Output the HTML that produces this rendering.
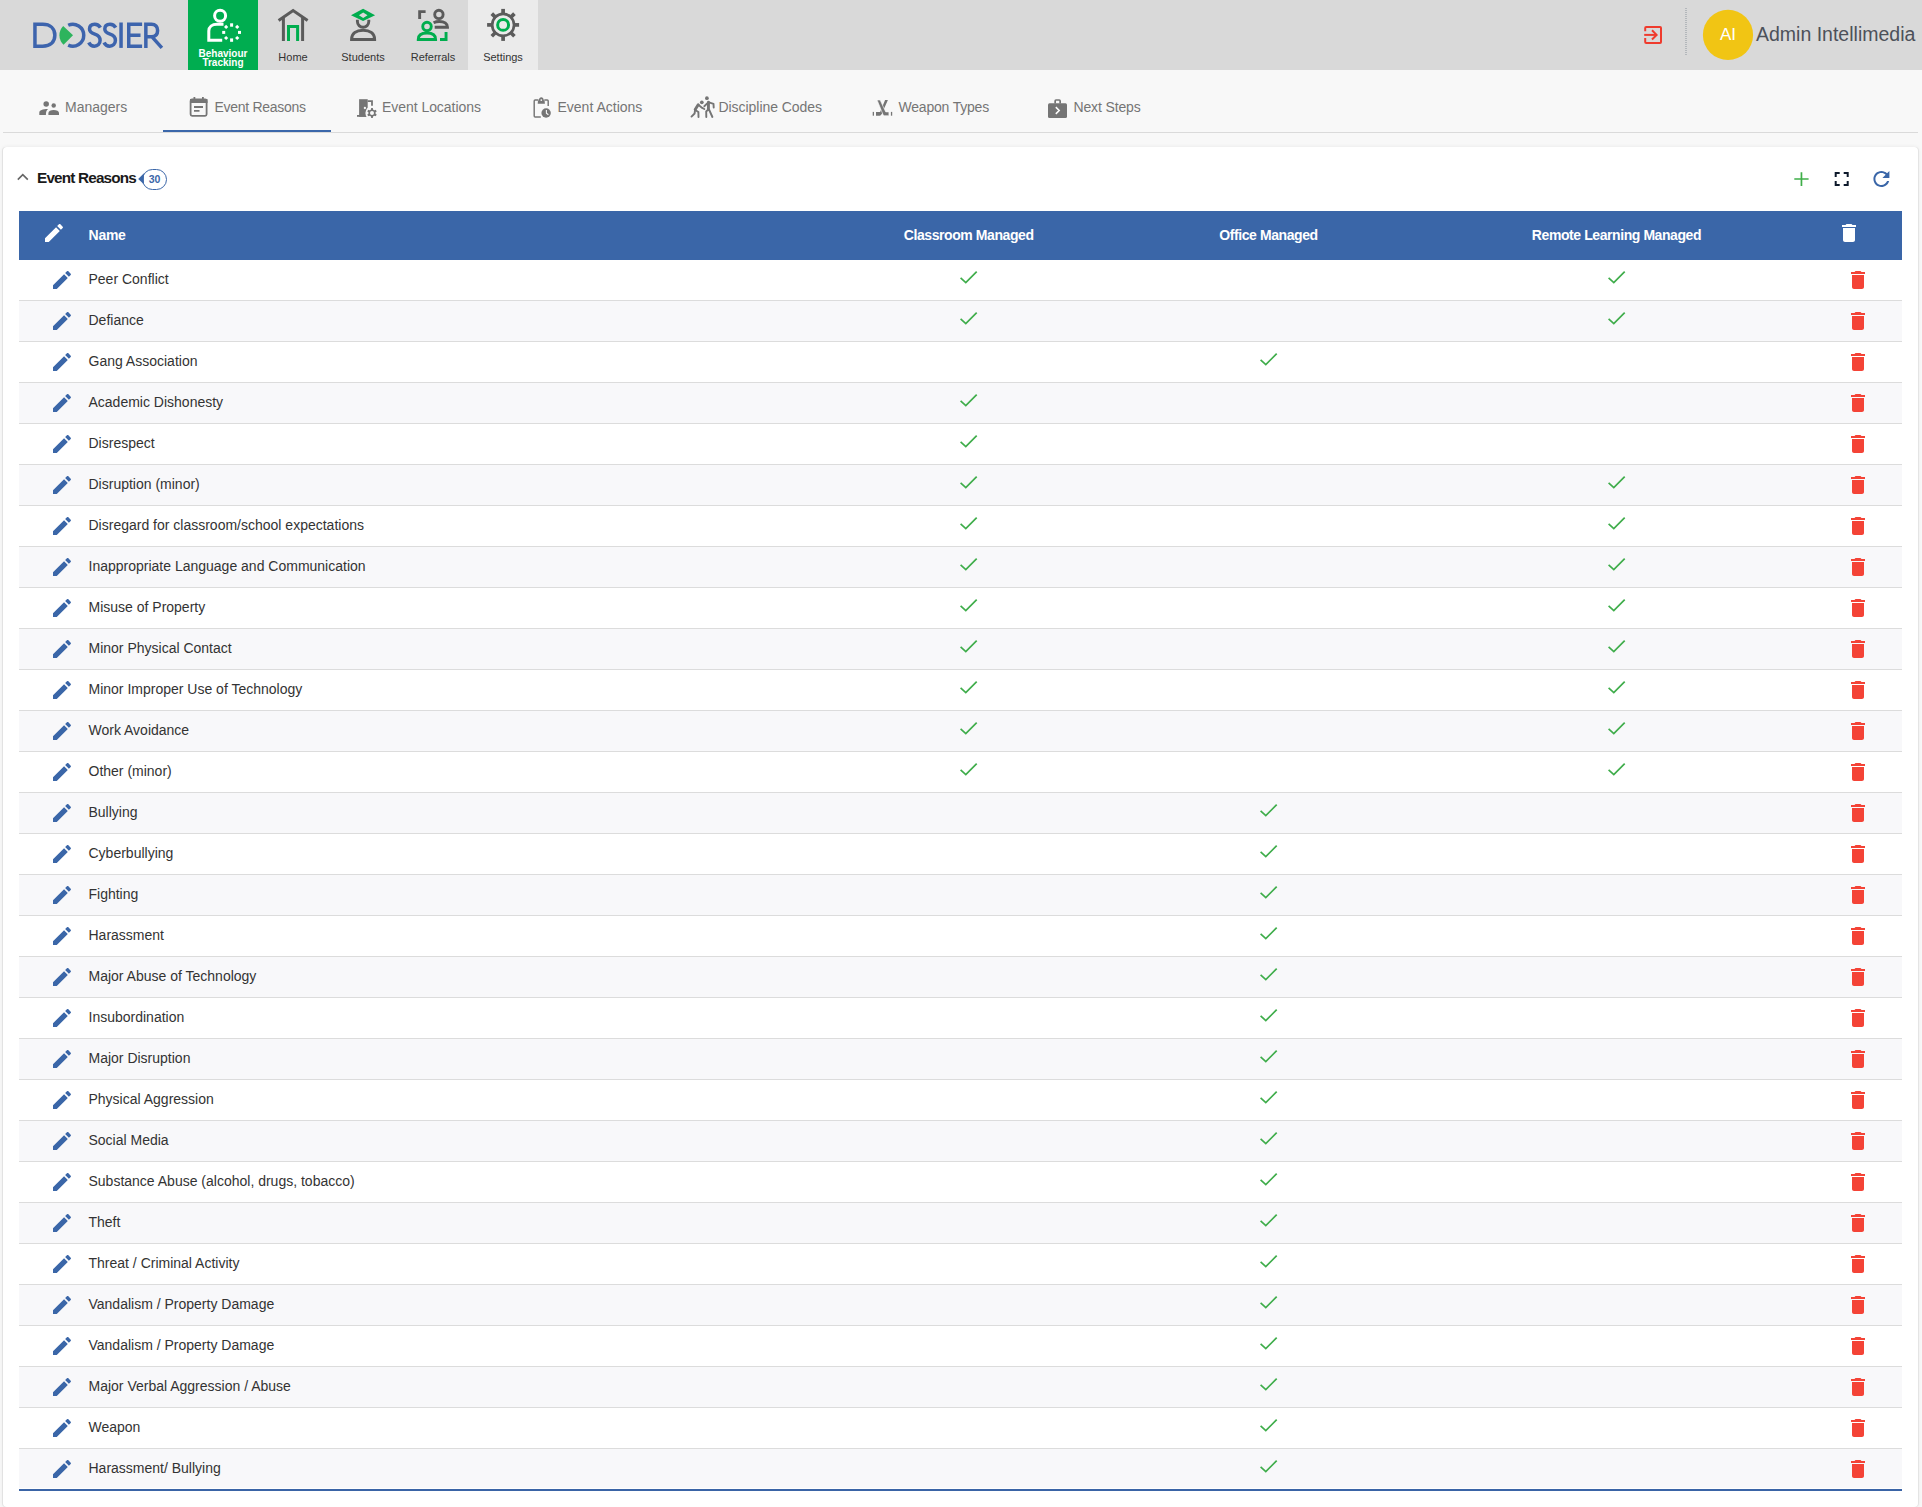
<!DOCTYPE html>
<html><head><meta charset="utf-8"><title>Event Reasons</title>
<style>
html,body{margin:0;padding:0}
body{width:1922px;height:1507px;position:relative;overflow:hidden;background:#f8f8f8;font-family:"Liberation Sans",sans-serif;color:#333}
.abs{position:absolute}
#nav{position:absolute;left:0;top:0;width:1922px;height:70px;background:#d9d9d9}
.nb{position:absolute;top:0;width:70px;height:70px}
.nl{position:absolute;left:0;width:70px;top:51px;text-align:center;font-size:11px;line-height:13px;color:#333}
.tab{position:absolute;top:0;height:62px;color:#757575;font-size:14px}
.tab svg{position:absolute}
.tab span{position:absolute;top:25px;line-height:16px;white-space:nowrap}
#card{position:absolute;left:3px;top:147px;width:1915px;height:1360px;background:#fff;border-radius:4px;box-shadow:1px 0 0 #e4e4e4,-1px 0 0 #e2e2e2,0 0 4px rgba(0,0,0,0.07)}
#thead{position:absolute;left:19px;top:211px;width:1883px;height:49px;background:#3a66a8;color:#fff;font-weight:bold;font-size:14px}
#thead span{position:absolute;top:16px;line-height:16px;white-space:nowrap;letter-spacing:-0.42px}
.row{position:absolute;left:19px;width:1883px;height:40px;border-bottom:1px solid #dcdcdc;background:#fff}
.row.alt{background:#f8f8fa}
.row.last{height:39px;border-bottom:none}
.row.last:after{content:"";position:absolute;left:0;top:40px;width:1883px;height:2px;background:#3a64a6}
.pen{position:absolute;left:31.4px;top:8px;fill:#3a66a8}
.nm{position:absolute;left:69.5px;top:11px;font-size:14px;line-height:16px;color:#333;white-space:nowrap}
.chk{position:absolute;top:10px}
.c1{left:940px}.c2{left:1240px}.c3{left:1588px}
.del{position:absolute;left:1826.5px;top:8px;fill:#f44336}
</style></head><body>
<div id="nav">
<svg class="abs" style="left:0;top:0" width="1922" height="70" viewBox="0 0 1922 70">
 <!-- logo -->
 <g transform="translate(33.2,22.5)" fill="none" stroke="#3d64ad" stroke-width="3.5">
  <path d="M1.75,1.75 H9.5 C17,1.75 21.65,6 21.65,12.7 C21.65,19.4 17,23.65 9.5,23.65 H1.75 Z"/>
  <path d="M35,2.76 A10.95,10.95 0 1 1 35,22.64"/>
  <path d="M67.2,5.2 C66,3 64,1.75 61.5,1.75 C58.2,1.75 56.3,3.7 56.3,6.5 C56.3,9.4 58.6,10.6 61.6,11.6 C64.9,12.7 66.9,14.2 66.9,17.8 C66.9,21.5 64.4,23.65 61.2,23.65 C58.6,23.65 56.6,22.3 55.6,20"/>
  <path d="M82.5,5.2 C81.3,3 79.3,1.75 76.8,1.75 C73.5,1.75 71.6,3.7 71.6,6.5 C71.6,9.4 73.9,10.6 76.9,11.6 C80.2,12.7 82.2,14.2 82.2,17.8 C82.2,21.5 79.7,23.65 76.5,23.65 C73.9,23.65 71.9,22.3 70.9,20"/>
  <path d="M87.85,0 V25.4"/>
  <path d="M108.9,1.75 H95.55 V23.65 H108.9 M95.55,12.7 H107.3"/>
  <path d="M112.65,25.4 V1.75 H118.3 C122.3,1.75 124.4,4.3 124.4,8 C124.4,11.8 122.3,14.2 118.3,14.2 H112.65 M118.6,14.2 L128.7,25.4"/>
 </g>
 <path transform="translate(33.2,22.5)" d="M30,3.5 L39.8,12.8 L30.4,22.2 A13,13 0 0 1 30,3.5 Z" fill="#2db45d"/>
 <!-- behaviour tracking box -->
 <rect x="188" y="0" width="70" height="70" fill="#00ad50"/>
 <rect x="468" y="0" width="70" height="70" fill="#ebebeb"/>
 <g fill="none" stroke="#fff" stroke-width="3">
  <circle cx="220.1" cy="15.8" r="5.5"/>
  <path d="M222.2,40.3 H208.8 V31 C208.8,27 212,24.3 217,24.3 H223.5"/>
 </g>
 <g fill="#fff">
  <rect x="230.1" y="23.3" width="3" height="3.4"/>
  <rect x="230.1" y="38.4" width="3" height="3.4"/>
  <rect x="222.2" y="30.9" width="3" height="3"/>
  <rect x="238" y="30.9" width="3" height="3"/>
  <rect x="224.6" y="25.4" width="3" height="3" transform="rotate(45 226.1 26.9)"/>
  <rect x="235.7" y="25.4" width="3" height="3" transform="rotate(45 237.2 26.9)"/>
  <rect x="224.6" y="36.5" width="3" height="3" transform="rotate(45 226.1 38)"/>
  <rect x="235.7" y="36.5" width="3" height="3" transform="rotate(45 237.2 38)"/>
 </g>
 <!-- home -->
 <g fill="none" stroke-width="3">
  <polyline points="278.6,20.6 293.1,10.6 307.6,20.6" stroke="#5b5b5b"/>
  <path d="M283.4,17.5 V40.9 M302.6,17.5 V40.9" stroke="#5b5b5b"/>
  <path d="M288.5,40.9 V26.6 H297.6 V40.9" stroke="#00ad4e"/>
 </g>
 <!-- students -->
 <path d="M351,15.3 L363.1,8.8 L375.1,15.3 L363.1,20.9 Z M358.9,15.2 L363.2,17.9 L367.5,15.2 L363.2,12.5 Z" fill="#00ad4e" fill-rule="evenodd"/>
 <g fill="none" stroke="#5b5b5b" stroke-width="2.9">
  <path d="M357.4,19.8 V21.6 A5.7,5.7 0 0 0 368.8,21.6 V19.8"/>
  <path d="M351.55,39.45 C351.55,33.2 356.5,30.25 363.1,30.25 C369.7,30.25 374.65,33.2 374.65,39.45 Z"/>
 </g>
 <!-- referrals -->
 <g fill="none" stroke-width="2.9">
  <path d="M419.65,19 V11.65 H425.6" stroke="#5b5b5b"/>
  <circle cx="438.9" cy="14.4" r="4.2" stroke="#5b5b5b"/>
  <path d="M434.7,27.2 H447.5 C447.5,23.6 444.3,21.45 439.3,21.45 C437.1,21.45 435.2,21.9 433.6,22.7" stroke="#5b5b5b"/>
  <circle cx="427" cy="26.5" r="4.25" stroke="#00ad4e"/>
  <path d="M418.25,39.45 C418.25,35.2 421.6,33.05 427,33.05 C432.4,33.05 435.6,35.2 435.6,39.45 Z" stroke="#00ad4e"/>
  <path d="M440,39.45 H446.05 V32" stroke="#00ad4e"/>
 </g>
 <!-- settings -->
 <g transform="translate(503.1,24.9)">
  <circle r="10.95" fill="none" stroke="#5b5b5b" stroke-width="2.7"/>
  <g fill="#5b5b5b">
   <rect x="-1.85" y="-16" width="3.7" height="6"/>
   <rect x="-1.85" y="-16" width="3.7" height="6" transform="rotate(45)"/>
   <rect x="-1.85" y="-16" width="3.7" height="6" transform="rotate(90)"/>
   <rect x="-1.85" y="-16" width="3.7" height="6" transform="rotate(135)"/>
   <rect x="-1.85" y="-16" width="3.7" height="6" transform="rotate(180)"/>
   <rect x="-1.85" y="-16" width="3.7" height="6" transform="rotate(225)"/>
   <rect x="-1.85" y="-16" width="3.7" height="6" transform="rotate(270)"/>
   <rect x="-1.85" y="-16" width="3.7" height="6" transform="rotate(315)"/>
  </g>
  <circle r="5.45" fill="none" stroke="#00ad4e" stroke-width="3"/>
 </g>
 <!-- logout -->
 <g fill="none" stroke="#ef3b2d" stroke-width="2">
  <path d="M1645.2,31.2 V28 Q1645.2,27 1646.2,27 H1660 Q1661,27 1661,28 V42 Q1661,43 1660,43 H1646.2 Q1645.2,43 1645.2,42 V38.1"/>
  <path d="M1644.2,34.9 H1656.5"/>
  <path d="M1652,30.3 L1656.6,34.9 L1652,39.5"/>
 </g>
 <circle cx="1728" cy="34.9" r="25.1" fill="#f1c514"/>
</svg>
<div class="nl" style="left:188px;top:49px;color:#fff;font-weight:bold;font-size:10px;line-height:9.2px">Behaviour<br>Tracking</div>
<div class="nl" style="left:258px">Home</div>
<div class="nl" style="left:328px">Students</div>
<div class="nl" style="left:398px">Referrals</div>
<div class="nl" style="left:468px">Settings</div>
<div class="abs" style="left:1685px;top:8px;width:2px;height:47px;background:repeating-linear-gradient(to bottom,#b3b7bb 0,#b3b7bb 1px,transparent 1px,transparent 2px)"></div>
<div class="abs" style="left:1703px;top:26px;width:50px;text-align:center;color:#fff;font-size:17px;line-height:18px">AI</div>
<div class="abs" style="left:1756px;top:23px;font-size:19.5px;line-height:22px;color:#4d515a;white-space:nowrap">Admin Intellimedia</div>
</div>
<!-- tabs -->
<svg class="abs" style="left:0;top:70px" width="1922" height="70" viewBox="0 70 1922 70">
 <g fill="#757575">
  <!-- managers (people) -->
  <circle cx="46.2" cy="104" r="2.75"/><circle cx="53.7" cy="105.5" r="2.2"/>
  <path d="M39.3,114.9 V112.6 C39.3,110.3 42.6,109 48.1,109 C46.5,110.3 45.9,112 45.9,114.9 Z"/>
  <path d="M48.4,114.9 V113.1 C48.4,111.1 50.8,110 53.7,110 C56.6,110 59,111.1 59,113.1 V114.9 Z"/>
 </g>
 <!-- event reasons (calendar note) -->
 <g fill="none" stroke="#757575" stroke-width="1.8">
  <rect x="190.6" y="99.5" width="16" height="16.3" rx="1.5"/>
  <path d="M194,107 H203 M194,110.8 H199.5" />
 </g>
 <rect x="190" y="99" width="17.5" height="4" fill="#757575"/>
 <rect x="193.5" y="97" width="1.8" height="3" fill="#757575"/>
 <rect x="202" y="97" width="1.8" height="3" fill="#757575"/>
 <!-- event locations -->
 <defs><mask id="doorm"><rect x="340" y="90" width="60" height="40" fill="#fff"/><circle cx="372" cy="113" r="6.6" fill="#000"/></mask></defs>
 <g fill="#757575" mask="url(#doorm)">
  <rect x="359.1" y="99.2" width="8.6" height="17.6"/>
  <rect x="357" y="115" width="9" height="1.8"/>
 </g>
 <path d="M367.7,100.2 H372.9 V105.7 H371.1 V101.9 H367.7 Z" fill="#757575"/>
 <circle cx="364.9" cy="108" r="1.15" fill="#f8f8f8"/>
 <g transform="translate(372,113)" fill="#757575">
  <circle r="3.6"/>
  <rect x="-1" y="-4.9" width="2" height="9.8"/>
  <rect x="-1" y="-4.9" width="2" height="9.8" transform="rotate(60)"/>
  <rect x="-1" y="-4.9" width="2" height="9.8" transform="rotate(120)"/>
 </g>
 <circle cx="372" cy="113" r="2" fill="#f8f8f8"/>
 <!-- event actions (clipboard clock) -->
 <path d="M540.8,117.05 H535.2 Q534.2,117.05 534.2,116.05 V101.1 Q534.2,100.05 535.2,100.05 H538.5 M544.3,100.05 H547.2 Q548.2,100.05 548.2,101.1 V105.9" fill="none" stroke="#757575" stroke-width="1.45"/>
 <path d="M537.7,103.8 H544.9 L544.6,100.6 H543.9 Q543.3,97.3 541.3,97.3 Q539.3,97.3 538.7,100.6 H538 Z" fill="#757575"/>
 <circle cx="541.3" cy="100.1" r="0.9" fill="#f8f8f8"/>
 <circle cx="546.1" cy="113" r="4.7" fill="#757575"/>
 <path d="M546.4,110.1 V113.2 L548.4,114.8" fill="none" stroke="#f8f8f8" stroke-width="1.1"/>
 <!-- discipline codes (two figures) -->
 <g fill="#757575">
  <circle cx="701.8" cy="102.3" r="1.85"/>
  <circle cx="706.9" cy="98.2" r="1.85"/>
 </g>
 <g fill="none" stroke="#757575" stroke-linecap="round" stroke-linejoin="round">
  <path d="M698.2,104.8 L695.2,109.6" stroke-width="2.9"/>
  <path d="M698.6,105 L702.2,107.9 L704.3,109" stroke-width="1.9"/>
  <path d="M695.2,110 L698.4,112 L698.5,117" stroke-width="1.9"/>
  <path d="M695,110.5 L694.6,113.5 L691.5,116.6" stroke-width="1.9"/>
  <path d="M708.5,102.2 L708.4,109.6" stroke-width="2.9"/>
  <path d="M708,102.6 L704.3,106.2" stroke-width="1.9"/>
  <path d="M709,102.3 L713.5,103.8 L713.7,107.5" stroke-width="1.9"/>
  <path d="M707.8,109.8 L706.2,111.5 L706.3,117" stroke-width="1.9"/>
  <path d="M709,109.5 L712.4,117" stroke-width="1.9"/>
 </g>
 <!-- weapon types (hockey sticks) -->
 <g fill="#757575">
  <path d="M885.1,100 H887.9 L882.9,111.3 Q881.6,115.7 879.4,115.7 H876 V111.9 H880.1 Z"/>
  <path d="M877.1,100 H880.1 L885.7,111.9 H888.9 V115.7 H884.4 Q883.5,115.7 883,114.6 Z" stroke="#f8f8f8" stroke-width="0.6"/>
  <rect x="872.7" y="111.9" width="1.3" height="3.8"/>
  <rect x="890.9" y="111.9" width="1.3" height="3.8"/>
 </g>
 <!-- next steps (briefcase) -->
 <g fill="#757575">
  <rect x="1048" y="103.3" width="19" height="14.6" rx="1.5"/>
  <path d="M1054.3,103.5 V101 Q1054.3,99.2 1056,99.2 H1059.2 Q1061,99.2 1061,101 V103.5 H1059.3 V100.8 H1056 V103.5 Z"/>
 </g>
 <path d="M1055.8,107.1 L1059.2,110.5 L1055.8,113.9" fill="none" stroke="#fff" stroke-width="1.5"/>
</svg>
<div class="abs" style="left:65px;top:99px;font-size:14px;line-height:16px;color:#757575;white-space:nowrap">Managers</div>
<div class="abs" style="left:214.5px;top:99px;font-size:14px;line-height:16px;color:#757575;white-space:nowrap;letter-spacing:-0.29px">Event Reasons</div>
<div class="abs" style="left:382px;top:99px;font-size:14px;line-height:16px;color:#757575;white-space:nowrap;letter-spacing:-0.05px">Event Locations</div>
<div class="abs" style="left:557.5px;top:99px;font-size:14px;line-height:16px;color:#757575;white-space:nowrap">Event Actions</div>
<div class="abs" style="left:718.5px;top:99px;font-size:14px;line-height:16px;color:#757575;white-space:nowrap;letter-spacing:-0.05px">Discipline Codes</div>
<div class="abs" style="left:898.5px;top:99px;font-size:14px;line-height:16px;color:#757575;white-space:nowrap;letter-spacing:-0.2px">Weapon Types</div>
<div class="abs" style="left:1073.5px;top:99px;font-size:14px;line-height:16px;color:#757575;white-space:nowrap;letter-spacing:-0.14px">Next Steps</div>
<div class="abs" style="left:163px;top:130px;width:168px;height:2px;background:#3b67aa"></div>
<div class="abs" style="left:3px;top:132px;width:1915px;height:1px;background:#dadada"></div>
<!-- card -->
<div id="card"></div>
<svg class="abs" style="left:0;top:147px" width="1922" height="60" viewBox="0 147 1922 60">
 <path d="M17.8,179.6 L22.8,174.6 L27.8,179.6" fill="none" stroke="#666" stroke-width="1.6"/>
 <rect x="142.5" y="169.5" width="24" height="20" rx="10" fill="#fff" stroke="#3a66a8" stroke-width="1"/>
 <path d="M138.2,178.9 L143.9,173.2 V184.2 Z" fill="#3a66a8"/>
 <g stroke="#3fae49" stroke-width="1.7"><path d="M1794.3,179 H1808.6 M1801.45,172.2 V185.9"/></g>
 <g transform="translate(1829.7,167)" fill="#0e1a2b"><path d="M7 14H5v5h5v-2H7v-3zm-2-4h2V7h3V5H5v5zm12 7h-3v2h5v-5h-2v3zM14 5v2h3v3h2V5h-5z"/></g>
 <g transform="translate(1869.4,167)" fill="#3a66a8"><path d="M17.65 6.35C16.2 4.9 14.21 4 12 4c-4.42 0-7.99 3.58-7.99 8s3.57 8 7.99 8c3.73 0 6.84-2.55 7.73-6h-2.08c-.82 2.33-3.04 4-5.65 4-3.31 0-6-2.69-6-6s2.69-6 6-6c1.66 0 3.14.69 4.22 1.78L13 11h7V4l-2.35 2.35z"/></g>
</svg>
<div class="abs" style="left:37px;top:169px;font-size:15.3px;letter-spacing:-0.82px;line-height:17px;font-weight:bold;color:#1a1a1a;white-space:nowrap">Event Reasons</div>
<div class="abs" style="left:142px;top:172.5px;width:25px;text-align:center;font-size:10.5px;line-height:13px;font-weight:bold;color:#3a66a8">30</div>
<div id="thead">
 <svg class="abs" style="left:23px;top:10px" width="24" height="24" viewBox="0 0 24 24" fill="#fff"><path d="M3 17.25V21h3.75L17.81 9.94l-3.75-3.75L3 17.25zM20.71 7.04c.39-.39.39-1.02 0-1.41l-2.34-2.34c-.39-.39-1.02-.39-1.41 0l-1.83 1.83 3.75 3.75 1.83-1.83z"/></svg>
 <span style="left:69.6px;letter-spacing:-0.3px">Name</span>
 <span style="left:849.7px;width:200px;text-align:center">Classroom Managed</span>
 <span style="left:1149.5px;width:200px;text-align:center">Office Managed</span>
 <span style="left:1497.5px;width:200px;text-align:center">Remote Learning Managed</span>
 <svg class="abs" style="left:1818.3px;top:10px" width="24" height="24" viewBox="0 0 24 24" fill="#fff"><path d="M6 19c0 1.1.9 2 2 2h8c1.1 0 2-.9 2-2V7H6v12zM19 4h-3.5l-1-1h-5l-1 1H5v2h14V4z"/></svg>
</div>
<div id="tbl">
<div class="row" style="top:260px"><svg class="pen" width="24" height="24" viewBox="0 0 24 24"><path d="M3 17.25V21h3.75L17.81 9.94l-3.75-3.75L3 17.25zM20.71 7.04c.39-.39.39-1.02 0-1.41l-2.34-2.34c-.39-.39-1.02-.39-1.41 0l-1.83 1.83 3.75 3.75 1.83-1.83z"/></svg><span class="nm">Peer Conflict</span><svg class="chk c1" width="20" height="14" viewBox="0 0 20 14"><polyline points="1.6,7.8 6.8,12.6 17.7,1.6" fill="none" stroke="#3fad4b" stroke-width="1.7"/></svg><svg class="chk c3" width="20" height="14" viewBox="0 0 20 14"><polyline points="1.6,7.8 6.8,12.6 17.7,1.6" fill="none" stroke="#3fad4b" stroke-width="1.7"/></svg><svg class="del" width="24" height="24" viewBox="0 0 24 24"><path d="M6 19c0 1.1.9 2 2 2h8c1.1 0 2-.9 2-2V7H6v12zM19 4h-3.5l-1-1h-5l-1 1H5v2h14V4z"/></svg></div>
<div class="row alt" style="top:301px"><svg class="pen" width="24" height="24" viewBox="0 0 24 24"><path d="M3 17.25V21h3.75L17.81 9.94l-3.75-3.75L3 17.25zM20.71 7.04c.39-.39.39-1.02 0-1.41l-2.34-2.34c-.39-.39-1.02-.39-1.41 0l-1.83 1.83 3.75 3.75 1.83-1.83z"/></svg><span class="nm">Defiance</span><svg class="chk c1" width="20" height="14" viewBox="0 0 20 14"><polyline points="1.6,7.8 6.8,12.6 17.7,1.6" fill="none" stroke="#3fad4b" stroke-width="1.7"/></svg><svg class="chk c3" width="20" height="14" viewBox="0 0 20 14"><polyline points="1.6,7.8 6.8,12.6 17.7,1.6" fill="none" stroke="#3fad4b" stroke-width="1.7"/></svg><svg class="del" width="24" height="24" viewBox="0 0 24 24"><path d="M6 19c0 1.1.9 2 2 2h8c1.1 0 2-.9 2-2V7H6v12zM19 4h-3.5l-1-1h-5l-1 1H5v2h14V4z"/></svg></div>
<div class="row" style="top:342px"><svg class="pen" width="24" height="24" viewBox="0 0 24 24"><path d="M3 17.25V21h3.75L17.81 9.94l-3.75-3.75L3 17.25zM20.71 7.04c.39-.39.39-1.02 0-1.41l-2.34-2.34c-.39-.39-1.02-.39-1.41 0l-1.83 1.83 3.75 3.75 1.83-1.83z"/></svg><span class="nm">Gang Association</span><svg class="chk c2" width="20" height="14" viewBox="0 0 20 14"><polyline points="1.6,7.8 6.8,12.6 17.7,1.6" fill="none" stroke="#3fad4b" stroke-width="1.7"/></svg><svg class="del" width="24" height="24" viewBox="0 0 24 24"><path d="M6 19c0 1.1.9 2 2 2h8c1.1 0 2-.9 2-2V7H6v12zM19 4h-3.5l-1-1h-5l-1 1H5v2h14V4z"/></svg></div>
<div class="row alt" style="top:383px"><svg class="pen" width="24" height="24" viewBox="0 0 24 24"><path d="M3 17.25V21h3.75L17.81 9.94l-3.75-3.75L3 17.25zM20.71 7.04c.39-.39.39-1.02 0-1.41l-2.34-2.34c-.39-.39-1.02-.39-1.41 0l-1.83 1.83 3.75 3.75 1.83-1.83z"/></svg><span class="nm">Academic Dishonesty</span><svg class="chk c1" width="20" height="14" viewBox="0 0 20 14"><polyline points="1.6,7.8 6.8,12.6 17.7,1.6" fill="none" stroke="#3fad4b" stroke-width="1.7"/></svg><svg class="del" width="24" height="24" viewBox="0 0 24 24"><path d="M6 19c0 1.1.9 2 2 2h8c1.1 0 2-.9 2-2V7H6v12zM19 4h-3.5l-1-1h-5l-1 1H5v2h14V4z"/></svg></div>
<div class="row" style="top:424px"><svg class="pen" width="24" height="24" viewBox="0 0 24 24"><path d="M3 17.25V21h3.75L17.81 9.94l-3.75-3.75L3 17.25zM20.71 7.04c.39-.39.39-1.02 0-1.41l-2.34-2.34c-.39-.39-1.02-.39-1.41 0l-1.83 1.83 3.75 3.75 1.83-1.83z"/></svg><span class="nm">Disrespect</span><svg class="chk c1" width="20" height="14" viewBox="0 0 20 14"><polyline points="1.6,7.8 6.8,12.6 17.7,1.6" fill="none" stroke="#3fad4b" stroke-width="1.7"/></svg><svg class="del" width="24" height="24" viewBox="0 0 24 24"><path d="M6 19c0 1.1.9 2 2 2h8c1.1 0 2-.9 2-2V7H6v12zM19 4h-3.5l-1-1h-5l-1 1H5v2h14V4z"/></svg></div>
<div class="row alt" style="top:465px"><svg class="pen" width="24" height="24" viewBox="0 0 24 24"><path d="M3 17.25V21h3.75L17.81 9.94l-3.75-3.75L3 17.25zM20.71 7.04c.39-.39.39-1.02 0-1.41l-2.34-2.34c-.39-.39-1.02-.39-1.41 0l-1.83 1.83 3.75 3.75 1.83-1.83z"/></svg><span class="nm">Disruption (minor)</span><svg class="chk c1" width="20" height="14" viewBox="0 0 20 14"><polyline points="1.6,7.8 6.8,12.6 17.7,1.6" fill="none" stroke="#3fad4b" stroke-width="1.7"/></svg><svg class="chk c3" width="20" height="14" viewBox="0 0 20 14"><polyline points="1.6,7.8 6.8,12.6 17.7,1.6" fill="none" stroke="#3fad4b" stroke-width="1.7"/></svg><svg class="del" width="24" height="24" viewBox="0 0 24 24"><path d="M6 19c0 1.1.9 2 2 2h8c1.1 0 2-.9 2-2V7H6v12zM19 4h-3.5l-1-1h-5l-1 1H5v2h14V4z"/></svg></div>
<div class="row" style="top:506px"><svg class="pen" width="24" height="24" viewBox="0 0 24 24"><path d="M3 17.25V21h3.75L17.81 9.94l-3.75-3.75L3 17.25zM20.71 7.04c.39-.39.39-1.02 0-1.41l-2.34-2.34c-.39-.39-1.02-.39-1.41 0l-1.83 1.83 3.75 3.75 1.83-1.83z"/></svg><span class="nm">Disregard for classroom/school expectations</span><svg class="chk c1" width="20" height="14" viewBox="0 0 20 14"><polyline points="1.6,7.8 6.8,12.6 17.7,1.6" fill="none" stroke="#3fad4b" stroke-width="1.7"/></svg><svg class="chk c3" width="20" height="14" viewBox="0 0 20 14"><polyline points="1.6,7.8 6.8,12.6 17.7,1.6" fill="none" stroke="#3fad4b" stroke-width="1.7"/></svg><svg class="del" width="24" height="24" viewBox="0 0 24 24"><path d="M6 19c0 1.1.9 2 2 2h8c1.1 0 2-.9 2-2V7H6v12zM19 4h-3.5l-1-1h-5l-1 1H5v2h14V4z"/></svg></div>
<div class="row alt" style="top:547px"><svg class="pen" width="24" height="24" viewBox="0 0 24 24"><path d="M3 17.25V21h3.75L17.81 9.94l-3.75-3.75L3 17.25zM20.71 7.04c.39-.39.39-1.02 0-1.41l-2.34-2.34c-.39-.39-1.02-.39-1.41 0l-1.83 1.83 3.75 3.75 1.83-1.83z"/></svg><span class="nm">Inappropriate Language and Communication</span><svg class="chk c1" width="20" height="14" viewBox="0 0 20 14"><polyline points="1.6,7.8 6.8,12.6 17.7,1.6" fill="none" stroke="#3fad4b" stroke-width="1.7"/></svg><svg class="chk c3" width="20" height="14" viewBox="0 0 20 14"><polyline points="1.6,7.8 6.8,12.6 17.7,1.6" fill="none" stroke="#3fad4b" stroke-width="1.7"/></svg><svg class="del" width="24" height="24" viewBox="0 0 24 24"><path d="M6 19c0 1.1.9 2 2 2h8c1.1 0 2-.9 2-2V7H6v12zM19 4h-3.5l-1-1h-5l-1 1H5v2h14V4z"/></svg></div>
<div class="row" style="top:588px"><svg class="pen" width="24" height="24" viewBox="0 0 24 24"><path d="M3 17.25V21h3.75L17.81 9.94l-3.75-3.75L3 17.25zM20.71 7.04c.39-.39.39-1.02 0-1.41l-2.34-2.34c-.39-.39-1.02-.39-1.41 0l-1.83 1.83 3.75 3.75 1.83-1.83z"/></svg><span class="nm">Misuse of Property</span><svg class="chk c1" width="20" height="14" viewBox="0 0 20 14"><polyline points="1.6,7.8 6.8,12.6 17.7,1.6" fill="none" stroke="#3fad4b" stroke-width="1.7"/></svg><svg class="chk c3" width="20" height="14" viewBox="0 0 20 14"><polyline points="1.6,7.8 6.8,12.6 17.7,1.6" fill="none" stroke="#3fad4b" stroke-width="1.7"/></svg><svg class="del" width="24" height="24" viewBox="0 0 24 24"><path d="M6 19c0 1.1.9 2 2 2h8c1.1 0 2-.9 2-2V7H6v12zM19 4h-3.5l-1-1h-5l-1 1H5v2h14V4z"/></svg></div>
<div class="row alt" style="top:629px"><svg class="pen" width="24" height="24" viewBox="0 0 24 24"><path d="M3 17.25V21h3.75L17.81 9.94l-3.75-3.75L3 17.25zM20.71 7.04c.39-.39.39-1.02 0-1.41l-2.34-2.34c-.39-.39-1.02-.39-1.41 0l-1.83 1.83 3.75 3.75 1.83-1.83z"/></svg><span class="nm">Minor Physical Contact</span><svg class="chk c1" width="20" height="14" viewBox="0 0 20 14"><polyline points="1.6,7.8 6.8,12.6 17.7,1.6" fill="none" stroke="#3fad4b" stroke-width="1.7"/></svg><svg class="chk c3" width="20" height="14" viewBox="0 0 20 14"><polyline points="1.6,7.8 6.8,12.6 17.7,1.6" fill="none" stroke="#3fad4b" stroke-width="1.7"/></svg><svg class="del" width="24" height="24" viewBox="0 0 24 24"><path d="M6 19c0 1.1.9 2 2 2h8c1.1 0 2-.9 2-2V7H6v12zM19 4h-3.5l-1-1h-5l-1 1H5v2h14V4z"/></svg></div>
<div class="row" style="top:670px"><svg class="pen" width="24" height="24" viewBox="0 0 24 24"><path d="M3 17.25V21h3.75L17.81 9.94l-3.75-3.75L3 17.25zM20.71 7.04c.39-.39.39-1.02 0-1.41l-2.34-2.34c-.39-.39-1.02-.39-1.41 0l-1.83 1.83 3.75 3.75 1.83-1.83z"/></svg><span class="nm">Minor Improper Use of Technology</span><svg class="chk c1" width="20" height="14" viewBox="0 0 20 14"><polyline points="1.6,7.8 6.8,12.6 17.7,1.6" fill="none" stroke="#3fad4b" stroke-width="1.7"/></svg><svg class="chk c3" width="20" height="14" viewBox="0 0 20 14"><polyline points="1.6,7.8 6.8,12.6 17.7,1.6" fill="none" stroke="#3fad4b" stroke-width="1.7"/></svg><svg class="del" width="24" height="24" viewBox="0 0 24 24"><path d="M6 19c0 1.1.9 2 2 2h8c1.1 0 2-.9 2-2V7H6v12zM19 4h-3.5l-1-1h-5l-1 1H5v2h14V4z"/></svg></div>
<div class="row alt" style="top:711px"><svg class="pen" width="24" height="24" viewBox="0 0 24 24"><path d="M3 17.25V21h3.75L17.81 9.94l-3.75-3.75L3 17.25zM20.71 7.04c.39-.39.39-1.02 0-1.41l-2.34-2.34c-.39-.39-1.02-.39-1.41 0l-1.83 1.83 3.75 3.75 1.83-1.83z"/></svg><span class="nm">Work Avoidance</span><svg class="chk c1" width="20" height="14" viewBox="0 0 20 14"><polyline points="1.6,7.8 6.8,12.6 17.7,1.6" fill="none" stroke="#3fad4b" stroke-width="1.7"/></svg><svg class="chk c3" width="20" height="14" viewBox="0 0 20 14"><polyline points="1.6,7.8 6.8,12.6 17.7,1.6" fill="none" stroke="#3fad4b" stroke-width="1.7"/></svg><svg class="del" width="24" height="24" viewBox="0 0 24 24"><path d="M6 19c0 1.1.9 2 2 2h8c1.1 0 2-.9 2-2V7H6v12zM19 4h-3.5l-1-1h-5l-1 1H5v2h14V4z"/></svg></div>
<div class="row" style="top:752px"><svg class="pen" width="24" height="24" viewBox="0 0 24 24"><path d="M3 17.25V21h3.75L17.81 9.94l-3.75-3.75L3 17.25zM20.71 7.04c.39-.39.39-1.02 0-1.41l-2.34-2.34c-.39-.39-1.02-.39-1.41 0l-1.83 1.83 3.75 3.75 1.83-1.83z"/></svg><span class="nm">Other (minor)</span><svg class="chk c1" width="20" height="14" viewBox="0 0 20 14"><polyline points="1.6,7.8 6.8,12.6 17.7,1.6" fill="none" stroke="#3fad4b" stroke-width="1.7"/></svg><svg class="chk c3" width="20" height="14" viewBox="0 0 20 14"><polyline points="1.6,7.8 6.8,12.6 17.7,1.6" fill="none" stroke="#3fad4b" stroke-width="1.7"/></svg><svg class="del" width="24" height="24" viewBox="0 0 24 24"><path d="M6 19c0 1.1.9 2 2 2h8c1.1 0 2-.9 2-2V7H6v12zM19 4h-3.5l-1-1h-5l-1 1H5v2h14V4z"/></svg></div>
<div class="row alt" style="top:793px"><svg class="pen" width="24" height="24" viewBox="0 0 24 24"><path d="M3 17.25V21h3.75L17.81 9.94l-3.75-3.75L3 17.25zM20.71 7.04c.39-.39.39-1.02 0-1.41l-2.34-2.34c-.39-.39-1.02-.39-1.41 0l-1.83 1.83 3.75 3.75 1.83-1.83z"/></svg><span class="nm">Bullying</span><svg class="chk c2" width="20" height="14" viewBox="0 0 20 14"><polyline points="1.6,7.8 6.8,12.6 17.7,1.6" fill="none" stroke="#3fad4b" stroke-width="1.7"/></svg><svg class="del" width="24" height="24" viewBox="0 0 24 24"><path d="M6 19c0 1.1.9 2 2 2h8c1.1 0 2-.9 2-2V7H6v12zM19 4h-3.5l-1-1h-5l-1 1H5v2h14V4z"/></svg></div>
<div class="row" style="top:834px"><svg class="pen" width="24" height="24" viewBox="0 0 24 24"><path d="M3 17.25V21h3.75L17.81 9.94l-3.75-3.75L3 17.25zM20.71 7.04c.39-.39.39-1.02 0-1.41l-2.34-2.34c-.39-.39-1.02-.39-1.41 0l-1.83 1.83 3.75 3.75 1.83-1.83z"/></svg><span class="nm">Cyberbullying</span><svg class="chk c2" width="20" height="14" viewBox="0 0 20 14"><polyline points="1.6,7.8 6.8,12.6 17.7,1.6" fill="none" stroke="#3fad4b" stroke-width="1.7"/></svg><svg class="del" width="24" height="24" viewBox="0 0 24 24"><path d="M6 19c0 1.1.9 2 2 2h8c1.1 0 2-.9 2-2V7H6v12zM19 4h-3.5l-1-1h-5l-1 1H5v2h14V4z"/></svg></div>
<div class="row alt" style="top:875px"><svg class="pen" width="24" height="24" viewBox="0 0 24 24"><path d="M3 17.25V21h3.75L17.81 9.94l-3.75-3.75L3 17.25zM20.71 7.04c.39-.39.39-1.02 0-1.41l-2.34-2.34c-.39-.39-1.02-.39-1.41 0l-1.83 1.83 3.75 3.75 1.83-1.83z"/></svg><span class="nm">Fighting</span><svg class="chk c2" width="20" height="14" viewBox="0 0 20 14"><polyline points="1.6,7.8 6.8,12.6 17.7,1.6" fill="none" stroke="#3fad4b" stroke-width="1.7"/></svg><svg class="del" width="24" height="24" viewBox="0 0 24 24"><path d="M6 19c0 1.1.9 2 2 2h8c1.1 0 2-.9 2-2V7H6v12zM19 4h-3.5l-1-1h-5l-1 1H5v2h14V4z"/></svg></div>
<div class="row" style="top:916px"><svg class="pen" width="24" height="24" viewBox="0 0 24 24"><path d="M3 17.25V21h3.75L17.81 9.94l-3.75-3.75L3 17.25zM20.71 7.04c.39-.39.39-1.02 0-1.41l-2.34-2.34c-.39-.39-1.02-.39-1.41 0l-1.83 1.83 3.75 3.75 1.83-1.83z"/></svg><span class="nm">Harassment</span><svg class="chk c2" width="20" height="14" viewBox="0 0 20 14"><polyline points="1.6,7.8 6.8,12.6 17.7,1.6" fill="none" stroke="#3fad4b" stroke-width="1.7"/></svg><svg class="del" width="24" height="24" viewBox="0 0 24 24"><path d="M6 19c0 1.1.9 2 2 2h8c1.1 0 2-.9 2-2V7H6v12zM19 4h-3.5l-1-1h-5l-1 1H5v2h14V4z"/></svg></div>
<div class="row alt" style="top:957px"><svg class="pen" width="24" height="24" viewBox="0 0 24 24"><path d="M3 17.25V21h3.75L17.81 9.94l-3.75-3.75L3 17.25zM20.71 7.04c.39-.39.39-1.02 0-1.41l-2.34-2.34c-.39-.39-1.02-.39-1.41 0l-1.83 1.83 3.75 3.75 1.83-1.83z"/></svg><span class="nm">Major Abuse of Technology</span><svg class="chk c2" width="20" height="14" viewBox="0 0 20 14"><polyline points="1.6,7.8 6.8,12.6 17.7,1.6" fill="none" stroke="#3fad4b" stroke-width="1.7"/></svg><svg class="del" width="24" height="24" viewBox="0 0 24 24"><path d="M6 19c0 1.1.9 2 2 2h8c1.1 0 2-.9 2-2V7H6v12zM19 4h-3.5l-1-1h-5l-1 1H5v2h14V4z"/></svg></div>
<div class="row" style="top:998px"><svg class="pen" width="24" height="24" viewBox="0 0 24 24"><path d="M3 17.25V21h3.75L17.81 9.94l-3.75-3.75L3 17.25zM20.71 7.04c.39-.39.39-1.02 0-1.41l-2.34-2.34c-.39-.39-1.02-.39-1.41 0l-1.83 1.83 3.75 3.75 1.83-1.83z"/></svg><span class="nm">Insubordination</span><svg class="chk c2" width="20" height="14" viewBox="0 0 20 14"><polyline points="1.6,7.8 6.8,12.6 17.7,1.6" fill="none" stroke="#3fad4b" stroke-width="1.7"/></svg><svg class="del" width="24" height="24" viewBox="0 0 24 24"><path d="M6 19c0 1.1.9 2 2 2h8c1.1 0 2-.9 2-2V7H6v12zM19 4h-3.5l-1-1h-5l-1 1H5v2h14V4z"/></svg></div>
<div class="row alt" style="top:1039px"><svg class="pen" width="24" height="24" viewBox="0 0 24 24"><path d="M3 17.25V21h3.75L17.81 9.94l-3.75-3.75L3 17.25zM20.71 7.04c.39-.39.39-1.02 0-1.41l-2.34-2.34c-.39-.39-1.02-.39-1.41 0l-1.83 1.83 3.75 3.75 1.83-1.83z"/></svg><span class="nm">Major Disruption</span><svg class="chk c2" width="20" height="14" viewBox="0 0 20 14"><polyline points="1.6,7.8 6.8,12.6 17.7,1.6" fill="none" stroke="#3fad4b" stroke-width="1.7"/></svg><svg class="del" width="24" height="24" viewBox="0 0 24 24"><path d="M6 19c0 1.1.9 2 2 2h8c1.1 0 2-.9 2-2V7H6v12zM19 4h-3.5l-1-1h-5l-1 1H5v2h14V4z"/></svg></div>
<div class="row" style="top:1080px"><svg class="pen" width="24" height="24" viewBox="0 0 24 24"><path d="M3 17.25V21h3.75L17.81 9.94l-3.75-3.75L3 17.25zM20.71 7.04c.39-.39.39-1.02 0-1.41l-2.34-2.34c-.39-.39-1.02-.39-1.41 0l-1.83 1.83 3.75 3.75 1.83-1.83z"/></svg><span class="nm">Physical Aggression</span><svg class="chk c2" width="20" height="14" viewBox="0 0 20 14"><polyline points="1.6,7.8 6.8,12.6 17.7,1.6" fill="none" stroke="#3fad4b" stroke-width="1.7"/></svg><svg class="del" width="24" height="24" viewBox="0 0 24 24"><path d="M6 19c0 1.1.9 2 2 2h8c1.1 0 2-.9 2-2V7H6v12zM19 4h-3.5l-1-1h-5l-1 1H5v2h14V4z"/></svg></div>
<div class="row alt" style="top:1121px"><svg class="pen" width="24" height="24" viewBox="0 0 24 24"><path d="M3 17.25V21h3.75L17.81 9.94l-3.75-3.75L3 17.25zM20.71 7.04c.39-.39.39-1.02 0-1.41l-2.34-2.34c-.39-.39-1.02-.39-1.41 0l-1.83 1.83 3.75 3.75 1.83-1.83z"/></svg><span class="nm">Social Media</span><svg class="chk c2" width="20" height="14" viewBox="0 0 20 14"><polyline points="1.6,7.8 6.8,12.6 17.7,1.6" fill="none" stroke="#3fad4b" stroke-width="1.7"/></svg><svg class="del" width="24" height="24" viewBox="0 0 24 24"><path d="M6 19c0 1.1.9 2 2 2h8c1.1 0 2-.9 2-2V7H6v12zM19 4h-3.5l-1-1h-5l-1 1H5v2h14V4z"/></svg></div>
<div class="row" style="top:1162px"><svg class="pen" width="24" height="24" viewBox="0 0 24 24"><path d="M3 17.25V21h3.75L17.81 9.94l-3.75-3.75L3 17.25zM20.71 7.04c.39-.39.39-1.02 0-1.41l-2.34-2.34c-.39-.39-1.02-.39-1.41 0l-1.83 1.83 3.75 3.75 1.83-1.83z"/></svg><span class="nm">Substance Abuse (alcohol, drugs, tobacco)</span><svg class="chk c2" width="20" height="14" viewBox="0 0 20 14"><polyline points="1.6,7.8 6.8,12.6 17.7,1.6" fill="none" stroke="#3fad4b" stroke-width="1.7"/></svg><svg class="del" width="24" height="24" viewBox="0 0 24 24"><path d="M6 19c0 1.1.9 2 2 2h8c1.1 0 2-.9 2-2V7H6v12zM19 4h-3.5l-1-1h-5l-1 1H5v2h14V4z"/></svg></div>
<div class="row alt" style="top:1203px"><svg class="pen" width="24" height="24" viewBox="0 0 24 24"><path d="M3 17.25V21h3.75L17.81 9.94l-3.75-3.75L3 17.25zM20.71 7.04c.39-.39.39-1.02 0-1.41l-2.34-2.34c-.39-.39-1.02-.39-1.41 0l-1.83 1.83 3.75 3.75 1.83-1.83z"/></svg><span class="nm">Theft</span><svg class="chk c2" width="20" height="14" viewBox="0 0 20 14"><polyline points="1.6,7.8 6.8,12.6 17.7,1.6" fill="none" stroke="#3fad4b" stroke-width="1.7"/></svg><svg class="del" width="24" height="24" viewBox="0 0 24 24"><path d="M6 19c0 1.1.9 2 2 2h8c1.1 0 2-.9 2-2V7H6v12zM19 4h-3.5l-1-1h-5l-1 1H5v2h14V4z"/></svg></div>
<div class="row" style="top:1244px"><svg class="pen" width="24" height="24" viewBox="0 0 24 24"><path d="M3 17.25V21h3.75L17.81 9.94l-3.75-3.75L3 17.25zM20.71 7.04c.39-.39.39-1.02 0-1.41l-2.34-2.34c-.39-.39-1.02-.39-1.41 0l-1.83 1.83 3.75 3.75 1.83-1.83z"/></svg><span class="nm">Threat / Criminal Activity</span><svg class="chk c2" width="20" height="14" viewBox="0 0 20 14"><polyline points="1.6,7.8 6.8,12.6 17.7,1.6" fill="none" stroke="#3fad4b" stroke-width="1.7"/></svg><svg class="del" width="24" height="24" viewBox="0 0 24 24"><path d="M6 19c0 1.1.9 2 2 2h8c1.1 0 2-.9 2-2V7H6v12zM19 4h-3.5l-1-1h-5l-1 1H5v2h14V4z"/></svg></div>
<div class="row alt" style="top:1285px"><svg class="pen" width="24" height="24" viewBox="0 0 24 24"><path d="M3 17.25V21h3.75L17.81 9.94l-3.75-3.75L3 17.25zM20.71 7.04c.39-.39.39-1.02 0-1.41l-2.34-2.34c-.39-.39-1.02-.39-1.41 0l-1.83 1.83 3.75 3.75 1.83-1.83z"/></svg><span class="nm">Vandalism / Property Damage</span><svg class="chk c2" width="20" height="14" viewBox="0 0 20 14"><polyline points="1.6,7.8 6.8,12.6 17.7,1.6" fill="none" stroke="#3fad4b" stroke-width="1.7"/></svg><svg class="del" width="24" height="24" viewBox="0 0 24 24"><path d="M6 19c0 1.1.9 2 2 2h8c1.1 0 2-.9 2-2V7H6v12zM19 4h-3.5l-1-1h-5l-1 1H5v2h14V4z"/></svg></div>
<div class="row" style="top:1326px"><svg class="pen" width="24" height="24" viewBox="0 0 24 24"><path d="M3 17.25V21h3.75L17.81 9.94l-3.75-3.75L3 17.25zM20.71 7.04c.39-.39.39-1.02 0-1.41l-2.34-2.34c-.39-.39-1.02-.39-1.41 0l-1.83 1.83 3.75 3.75 1.83-1.83z"/></svg><span class="nm">Vandalism / Property Damage</span><svg class="chk c2" width="20" height="14" viewBox="0 0 20 14"><polyline points="1.6,7.8 6.8,12.6 17.7,1.6" fill="none" stroke="#3fad4b" stroke-width="1.7"/></svg><svg class="del" width="24" height="24" viewBox="0 0 24 24"><path d="M6 19c0 1.1.9 2 2 2h8c1.1 0 2-.9 2-2V7H6v12zM19 4h-3.5l-1-1h-5l-1 1H5v2h14V4z"/></svg></div>
<div class="row alt" style="top:1367px"><svg class="pen" width="24" height="24" viewBox="0 0 24 24"><path d="M3 17.25V21h3.75L17.81 9.94l-3.75-3.75L3 17.25zM20.71 7.04c.39-.39.39-1.02 0-1.41l-2.34-2.34c-.39-.39-1.02-.39-1.41 0l-1.83 1.83 3.75 3.75 1.83-1.83z"/></svg><span class="nm">Major Verbal Aggression / Abuse</span><svg class="chk c2" width="20" height="14" viewBox="0 0 20 14"><polyline points="1.6,7.8 6.8,12.6 17.7,1.6" fill="none" stroke="#3fad4b" stroke-width="1.7"/></svg><svg class="del" width="24" height="24" viewBox="0 0 24 24"><path d="M6 19c0 1.1.9 2 2 2h8c1.1 0 2-.9 2-2V7H6v12zM19 4h-3.5l-1-1h-5l-1 1H5v2h14V4z"/></svg></div>
<div class="row" style="top:1408px"><svg class="pen" width="24" height="24" viewBox="0 0 24 24"><path d="M3 17.25V21h3.75L17.81 9.94l-3.75-3.75L3 17.25zM20.71 7.04c.39-.39.39-1.02 0-1.41l-2.34-2.34c-.39-.39-1.02-.39-1.41 0l-1.83 1.83 3.75 3.75 1.83-1.83z"/></svg><span class="nm">Weapon</span><svg class="chk c2" width="20" height="14" viewBox="0 0 20 14"><polyline points="1.6,7.8 6.8,12.6 17.7,1.6" fill="none" stroke="#3fad4b" stroke-width="1.7"/></svg><svg class="del" width="24" height="24" viewBox="0 0 24 24"><path d="M6 19c0 1.1.9 2 2 2h8c1.1 0 2-.9 2-2V7H6v12zM19 4h-3.5l-1-1h-5l-1 1H5v2h14V4z"/></svg></div>
<div class="row alt last" style="top:1449px"><svg class="pen" width="24" height="24" viewBox="0 0 24 24"><path d="M3 17.25V21h3.75L17.81 9.94l-3.75-3.75L3 17.25zM20.71 7.04c.39-.39.39-1.02 0-1.41l-2.34-2.34c-.39-.39-1.02-.39-1.41 0l-1.83 1.83 3.75 3.75 1.83-1.83z"/></svg><span class="nm">Harassment/ Bullying</span><svg class="chk c2" width="20" height="14" viewBox="0 0 20 14"><polyline points="1.6,7.8 6.8,12.6 17.7,1.6" fill="none" stroke="#3fad4b" stroke-width="1.7"/></svg><svg class="del" width="24" height="24" viewBox="0 0 24 24"><path d="M6 19c0 1.1.9 2 2 2h8c1.1 0 2-.9 2-2V7H6v12zM19 4h-3.5l-1-1h-5l-1 1H5v2h14V4z"/></svg></div>
</div></body></html>
